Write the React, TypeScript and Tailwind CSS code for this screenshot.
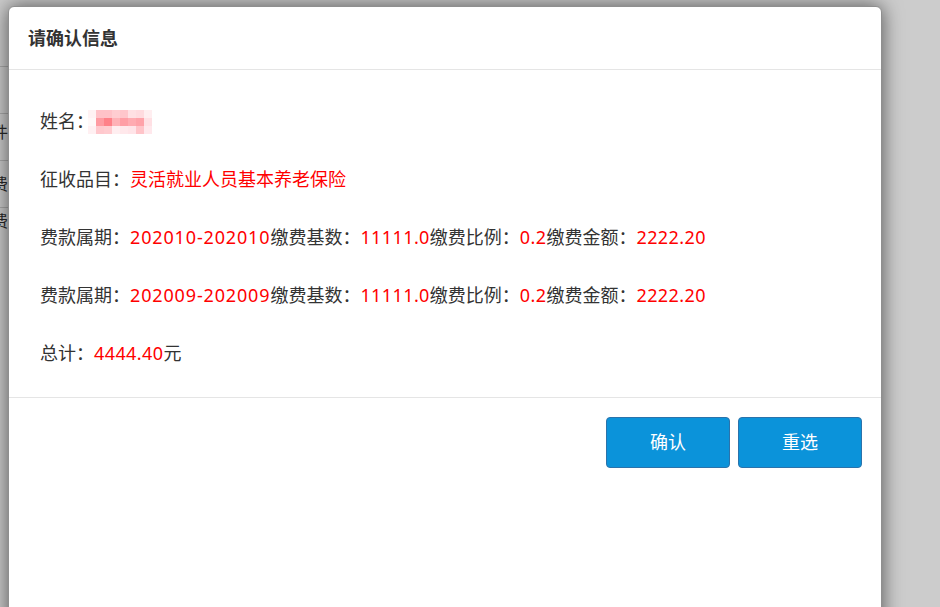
const mosaic = [
  ["bg-[#fff2f3]", "bg-[#ffc2c8]", "bg-[#ffc2c8]", "bg-[#ffcdd1]", "bg-[#ffc6cb]", "bg-[#ffe0e3]", "bg-[#ffdbdf]", "bg-[#ffeef0]"],
  ["bg-[#fff8f8]", "bg-[#ff9ba2]", "bg-[#ff8189]", "bg-[#ffb2b7]", "bg-[#ff9ea5]", "bg-[#ffabb1]", "bg-[#ffa2a9]", "bg-[#ffe0e4]"],
  ["bg-[#fff0f2]", "bg-[#ffc8cd]", "bg-[#ffccd0]", "bg-[#ffeef0]", "bg-[#ffe8eb]", "bg-[#ffe4e8]", "bg-[#ffc4c9]", "bg-[#ffe8ec]"],
];

const periods = [
  { period: "202010-202010", base: "11111.0", ratio: "0.2", amount: "2222.20" },
  { period: "202009-202009", base: "11111.0", ratio: "0.2", amount: "2222.20" },
];

// rows of the page behind the dialog, only a sliver shows at the left edge
const backRows = [
  { text: "", pad: "pt-[8px]" },
  { text: "件", pad: "pt-[8px]" },
  { text: "费", pad: "pt-[13px]" },
  { text: "费", pad: "pt-[3px]" },
];

function Red({ children, wide }: { children: React.ReactNode; wide?: boolean }) {
  return (
    <span className={wide ? "text-[#ff0000] tracking-[0.85px]" : "text-[#ff0000] tracking-[0.4px]"}>
      {children}
    </span>
  );
}

export default function App() {
  return (
    <div
      className="relative w-[940px] h-[607px] overflow-hidden bg-white"
      style={{ fontFamily: '"Noto Sans", "Noto Sans CJK SC", sans-serif' }}
    >
      {/* page behind the dialog */}
      <div className="w-[200px] pt-[66px] text-[16px] leading-[20px] text-[#333]">
        {backRows.map((r, i) => (
          <div key={i} className={`h-[47px] border-t border-[#d5d5d5] ${r.pad}`}>
            <span className="block -ml-[8px]">{r.text}</span>
          </div>
        ))}
      </div>

      {/* overlay */}
      <div className="absolute inset-0 bg-black/20" />

      {/* dialog */}
      <div className="absolute left-[8px] top-[6px] w-[874px] h-[640px] bg-white rounded-t-[6px] border border-[#8f8f8f] shadow-[0_0_20px_rgba(0,0,0,0.6)]">
        <div className="h-[63px] pl-[19px] flex items-center border-b border-[#e5e5e5]">
          <h3 className="text-[18px] font-bold text-[#333]">请确认信息</h3>
        </div>

        <div className="pl-[31px] pt-[38px] pb-[30px] flex flex-col gap-[31px] text-[18px] leading-[27px] text-[#333] border-b border-[#e5e5e5]">
          <div className="flex items-center">
            <span>姓名：</span>
            <span className="-ml-[6px] grid grid-cols-8">
              {mosaic.flat().map((c, i) => (
                <span key={i} className={`w-[8px] h-[8px] ${c}`} />
              ))}
            </span>
          </div>
          <div>
            征收品目：<span className="text-[#ff0000]">灵活就业人员基本养老保险</span>
          </div>
          {periods.map((p, i) => (
            <div key={i} className="whitespace-nowrap">
              费款属期：<Red wide>{p.period}</Red>缴费基数：<Red>{p.base}</Red>缴费比例：<Red>{p.ratio}</Red>
              缴费金额：<Red>{p.amount}</Red>
            </div>
          ))}
          <div>
            总计：<Red>4444.40</Red>元
          </div>
        </div>

        <div className="flex justify-end gap-[8px] pt-[19px] pr-[19px]">
          <button className="w-[124px] h-[51px] rounded-[4px] bg-[#0b93da] border border-[#2b73ab] text-white text-[18px]">
            确认
          </button>
          <button className="w-[124px] h-[51px] rounded-[4px] bg-[#0b93da] border border-[#2b73ab] text-white text-[18px]">
            重选
          </button>
        </div>
      </div>
    </div>
  );
}
